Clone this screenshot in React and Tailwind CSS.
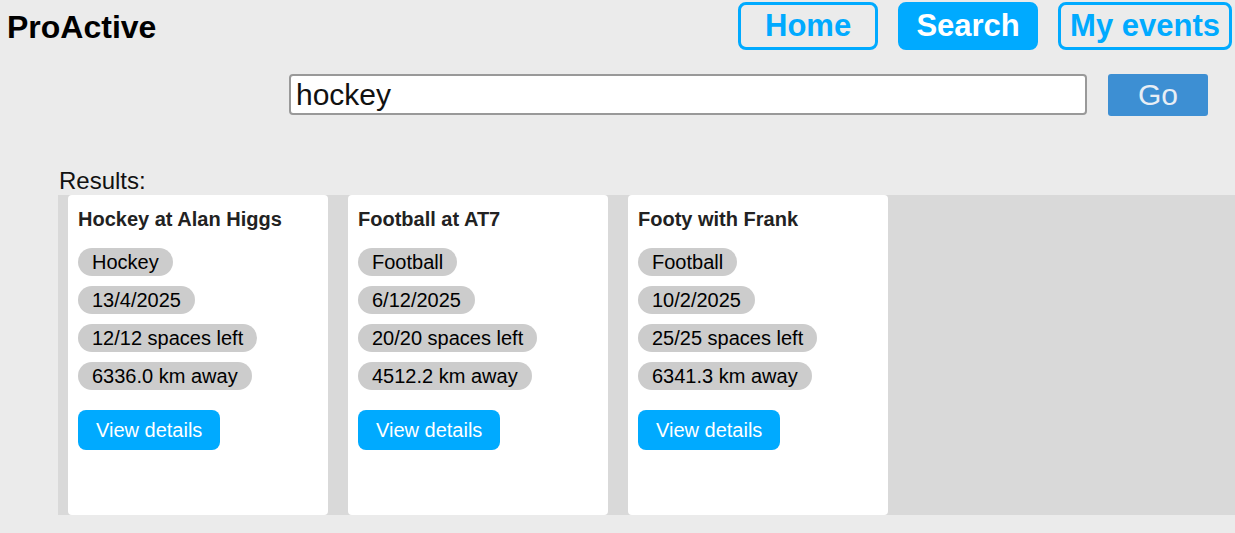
import React from 'react';

const events = [
    { title: 'Hockey at Alan Higgs', sport: 'Hockey', date: '13/4/2025', spaces: '12/12', dist: '6336.0' },
    { title: 'Football at AT7', sport: 'Football', date: '6/12/2025', spaces: '20/20', dist: '4512.2' },
    { title: 'Footy with Frank', sport: 'Football', date: '10/2/2025', spaces: '25/25', dist: '6341.3' },
];

// EventCard = one result card
function EventCard({ ev }) {
    return (
        <div className="bg-white w-[260px] h-[320px] rounded-[4px] shrink-0 px-[10px] pt-[13px]">
            <h3 className="font-bold text-[20px] text-[#222] mb-[17px]">{ev.title}</h3>
            <div className="flex flex-col items-start gap-[10px]">
                {[ev.sport, ev.date, `${ev.spaces} spaces left`, `${ev.dist} km away`].map((t) => (
                    <span key={t} className="bg-[#cccccc] rounded-full px-[14px] h-[28px] flex items-center text-[20px] text-black">
                        {t}
                    </span>
                ))}
            </div>
            <button className="mt-[20px] bg-[#00aaff] text-white text-[20px] h-[40px] px-[18px] rounded-[8px]">
                View details
            </button>
        </div>
    );
}

export default function App() {
    const nav = 'h-[48px] min-w-[140px] px-[9px] border-[3px] border-[#00aaff] rounded-[8px] flex items-center justify-center font-bold text-[31px]';
    return (
        <div className="min-h-[533px] bg-[#ebebeb] font-['Liberation_Sans',Arial,sans-serif] leading-[normal] overflow-hidden">
            {/* Header */}
            <div className="flex justify-between items-start">
                <h1 className="font-bold text-[32px] text-black pl-[7px] pt-[9px]">ProActive</h1>
                <nav className="flex gap-[20px] pt-[2px] pr-[3px]">
                    <a className={`${nav} text-[#00aaff]`}>Home</a>
                    <a className={`${nav} bg-[#00aaff] text-white`}>Search</a>
                    <a className={`${nav} text-[#00aaff]`}>My events</a>
                </nav>
            </div>

            {/* Search bar */}
            <div className="flex justify-end gap-[21px] pr-[27px] mt-[24px]">
                <input
                    defaultValue="hockey"
                    className="w-[798px] h-[41px] bg-white border-2 border-[#999] rounded-[4px] px-[5px] text-[30px] text-[#111] outline-none"
                />
                <button className="w-[100px] h-[42px] bg-[#3d8fd3] text-[#e8eef5] text-[30px] rounded-[3px]">Go</button>
            </div>

            {/* Results */}
            <p className="ml-[59px] mt-[51px] text-[24px] text-[#111]">Results:</p>
            <div className="ml-[58px] bg-[#d9d9d9] h-[320px] flex gap-[20px] pl-[10px]">
                {events.map((ev) => (
                    <EventCard key={ev.title} ev={ev} />
                ))}
            </div>
        </div>
    );
}
